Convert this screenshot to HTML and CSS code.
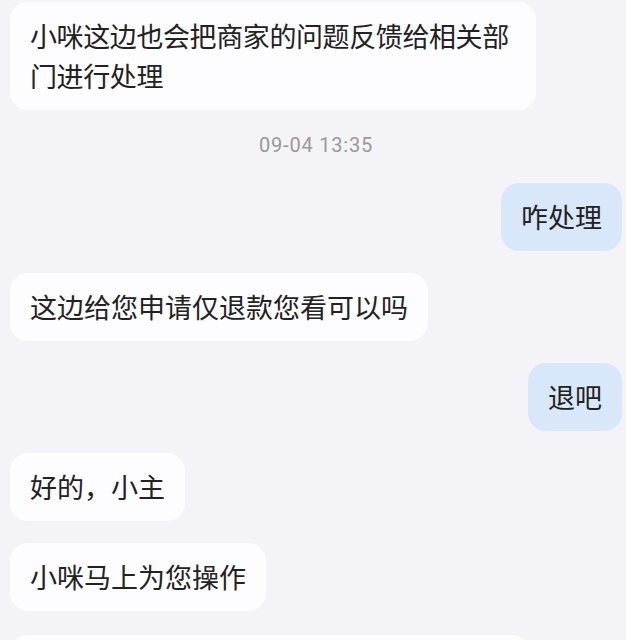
FILE: index.html
```html
<!DOCTYPE html>
<html lang="zh-CN">
  <head>
    <meta charset="UTF-8" />
    <meta name="viewport" content="width=device-width, initial-scale=1.0" />
    <title>客服会话</title>
    <link rel="stylesheet" href="styles.css">
  </head>
  <body>
    <div class="chat">
      <div class="msg left tight">小咪这边也会把商家的问题反馈给相关部门进行处理</div>
      <div class="time">09-04 13:35</div>
      <div class="msg right">咋处理</div>
      <div class="msg left">这边给您申请仅退款您看可以吗</div>
      <div class="msg right">退吧</div>
      <div class="msg left">好的，小主</div>
      <div class="msg left">小咪马上为您操作</div>
      <div class="msg left cut"></div>
    </div>
  </body>
</html>
```

FILE: styles.css
```css
html,
body {
  margin: 0;
  height: 640px;
  overflow: hidden;
}
body {
  background: #f4f3f7;
  font-family: "Noto Sans CJK SC", "Noto Sans", sans-serif;
  color: #222;
}
.chat {
  display: flex;
  flex-direction: column;
  gap: 22px;
  padding: 2px 4px 0 10px;
}
.msg {
  max-width: 490px;
  padding: 14px 20px;
  font-size: 27px;
  line-height: 40px;
  border-radius: 18px;
}
.msg.tight {
  max-width: 486px;
  letter-spacing: -0.4px;
}
.left {
  align-self: flex-start;
  background: #fdfcff;
}
.right {
  align-self: flex-end;
  background: #d9e7fb;
}
.cut {
  width: 480px;
  height: 40px;
  margin-top: 2px;
}
.time {
  align-self: center;
  margin-bottom: 3px;
  font-family: Roboto, "Liberation Sans", sans-serif;
  font-size: 20px;
  letter-spacing: 0.8px;
  line-height: 26px;
  color: #999;
}
```
